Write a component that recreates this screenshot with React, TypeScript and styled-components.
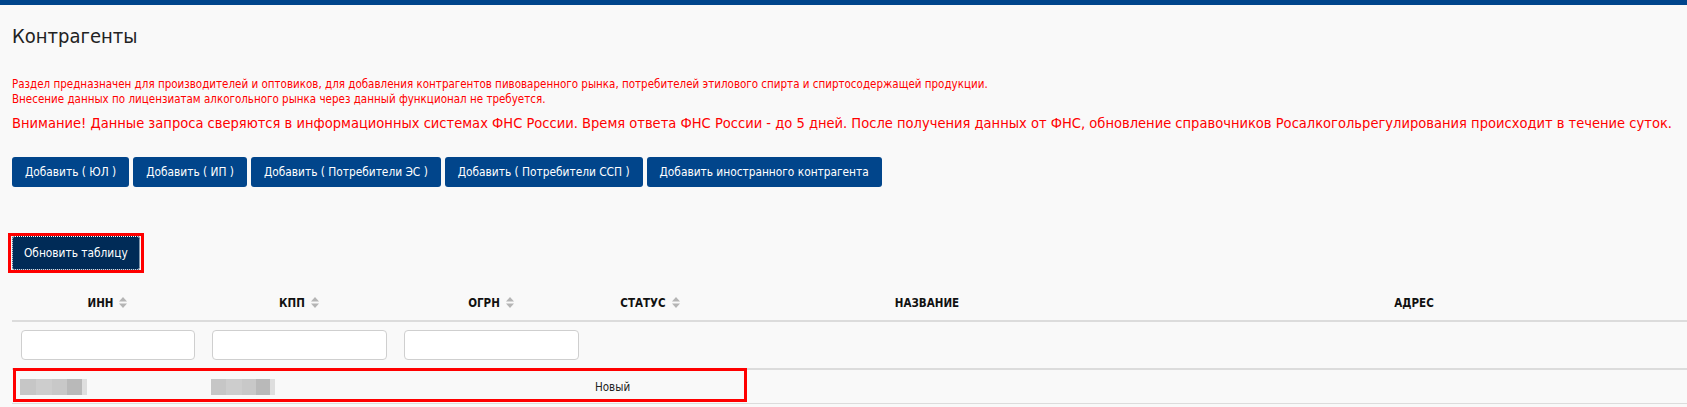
import React from "react";
import styled, { createGlobalStyle } from "styled-components";

const GlobalStyle = createGlobalStyle`
  html, body {
    margin: 0;
    padding: 0;
    background: #f9f9f9;
    font-family: "DejaVu Sans Condensed", "DejaVu Sans", sans-serif;
    font-stretch: condensed;
    color: #222;
  }
`;

const TopBar = styled.div`
  height: 5px;
  background: #00458c;
`;

const Page = styled.div`
  padding: 0 0 0 12px;
`;

const Title = styled.h1`
  margin: 0;
  padding-top: 17px;
  font-size: 20px;
  line-height: 28px;
  font-weight: normal;
  color: #222;
`;

const Notice = styled.p`
  margin: 27px 0 0;
  font-size: 11.5px;
  line-height: 15px;
  color: #ff0000;
`;

const Warning = styled.p`
  margin: 6px 0 0;
  font-size: 14.55px;
  line-height: 20px;
  color: #ff0000;
  white-space: nowrap;
`;

const ButtonRow = styled.div`
  display: flex;
  gap: 4px;
  margin-top: 24px;
`;

const ActionButton = styled.button<{ $dark?: boolean }>`
  height: 30px;
  padding: 0 13px;
  border: none;
  border-radius: 3px;
  background: ${(p) => (p.$dark ? "#002b57" : "#01458b")};
  color: #fff;
  font-family: inherit;
  font-stretch: condensed;
  font-size: 11.8px;
  cursor: pointer;
`;

const RefreshBox = styled.div`
  display: inline-flex;
  margin: 46px 0 0 -4px;
  padding: 0 1px;
  border: 3px solid #ff0000;
  & > button {
    height: 34px;
    padding: 0 12px;
    outline: 1px dotted #fff;
    outline-offset: -1px;
  }
`;

const TableWrap = styled.div`
  position: relative;
  margin-top: 12px;
`;

const Table = styled.table`
  width: 1675px;
  border-collapse: collapse;
  table-layout: fixed;
`;

const HeadCell = styled.th`
  height: 35px;
  padding: 0;
  text-align: center;
  font-size: 11.5px;
  font-weight: bold;
  color: #111;
  border-bottom: 2px solid #dcdcdc;
  white-space: nowrap;
`;

const FilterCell = styled.td`
  height: 46px;
  padding: 0 8px 0 9px;
  vertical-align: middle;
  border-bottom: 2px solid #dcdcdc;
`;

const FilterInput = styled.input`
  display: block;
  box-sizing: border-box;
  width: 100%;
  height: 30px;
  border: 1px solid #cfcfcf;
  border-radius: 4px;
  background: #fff;
`;

const DataCell = styled.td`
  height: 33px;
  padding: 0 8px;
  font-size: 11.5px;
  color: #222;
  vertical-align: middle;
  border-bottom: 1px solid #dcdcdc;
`;

const Blurred = styled.span<{ $w: number }>`
  display: block;
  width: ${(p) => p.$w}px;
  height: 16px;
  background: linear-gradient(
    90deg,
    #c6c6c6 0 24%,
    #cdcdcd 24% 48%,
    #c8c8c8 48% 70%,
    #b9b9b9 70% 92%,
    #dedede 92% 100%
  );
`;

const RowHighlight = styled.div`
  position: absolute;
  left: 1px;
  top: 83px;
  width: 734px;
  height: 34px;
  box-sizing: border-box;
  border: 3px solid #ff0000;
  pointer-events: none;
`;

const SortIcon = styled.svg`
  display: inline-block;
  vertical-align: -1px;
  margin-left: 6px;
`;

const Sort = () => (
  <SortIcon width="8" height="11" viewBox="0 0 8 11">
    <path d="M4 0 L8 4.5 H0 Z" fill="#b5b5b5" />
    <path d="M4 11 L8 6.5 H0 Z" fill="#b5b5b5" />
  </SortIcon>
);

const columns: { title: string; width: number; sortable: boolean; filter: boolean }[] = [
  { title: "ИНН", width: 191, sortable: true, filter: true },
  { title: "КПП", width: 192, sortable: true, filter: true },
  { title: "ОГРН", width: 192, sortable: true, filter: true },
  { title: "СТАТУС", width: 126, sortable: true, filter: false },
  { title: "НАЗВАНИЕ", width: 428, sortable: false, filter: false },
  { title: "АДРЕС", width: 546, sortable: false, filter: false },
];

const addButtons = [
  "Добавить ( ЮЛ )",
  "Добавить ( ИП )",
  "Добавить ( Потребители ЭС )",
  "Добавить ( Потребители ССП )",
  "Добавить иностранного контрагента",
];

export default function App() {
  return (
    <>
      <GlobalStyle />
      <TopBar />
      <Page>
        <Title>Контрагенты</Title>
        <Notice>
          Раздел предназначен для производителей и оптовиков, для добавления контрагентов пивоваренного рынка,
          потребителей этилового спирта и спиртосодержащей продукции.
          <br />
          Внесение данных по лицензиатам алкогольного рынка через данный функционал не требуется.
        </Notice>
        <Warning>
          Внимание! Данные запроса сверяются в информационных системах ФНС России. Время ответа ФНС России - до 5
          дней. После получения данных от ФНС, обновление справочников Росалкогольрегулирования происходит в течение
          суток.
        </Warning>
        <ButtonRow>
          {addButtons.map((b) => (
            <ActionButton key={b}>{b}</ActionButton>
          ))}
        </ButtonRow>
        <RefreshBox>
          <ActionButton $dark>Обновить таблицу</ActionButton>
        </RefreshBox>
        <TableWrap>
          <Table>
            <colgroup>
              {columns.map((c) => (
                <col key={c.title} style={{ width: c.width }} />
              ))}
            </colgroup>
            <thead>
              <tr>
                {columns.map((c) => (
                  <HeadCell key={c.title}>
                    {c.title}
                    {c.sortable && <Sort />}
                  </HeadCell>
                ))}
              </tr>
            </thead>
            <tbody>
              <tr>
                {columns.map((c) => (
                  <FilterCell key={c.title}>{c.filter && <FilterInput type="text" />}</FilterCell>
                ))}
              </tr>
              <tr>
                <DataCell>
                  <Blurred $w={67} />
                </DataCell>
                <DataCell>
                  <Blurred $w={64} />
                </DataCell>
                <DataCell />
                <DataCell>Новый</DataCell>
                <DataCell />
                <DataCell />
              </tr>
            </tbody>
          </Table>
          <RowHighlight />
        </TableWrap>
      </Page>
    </>
  );
}
